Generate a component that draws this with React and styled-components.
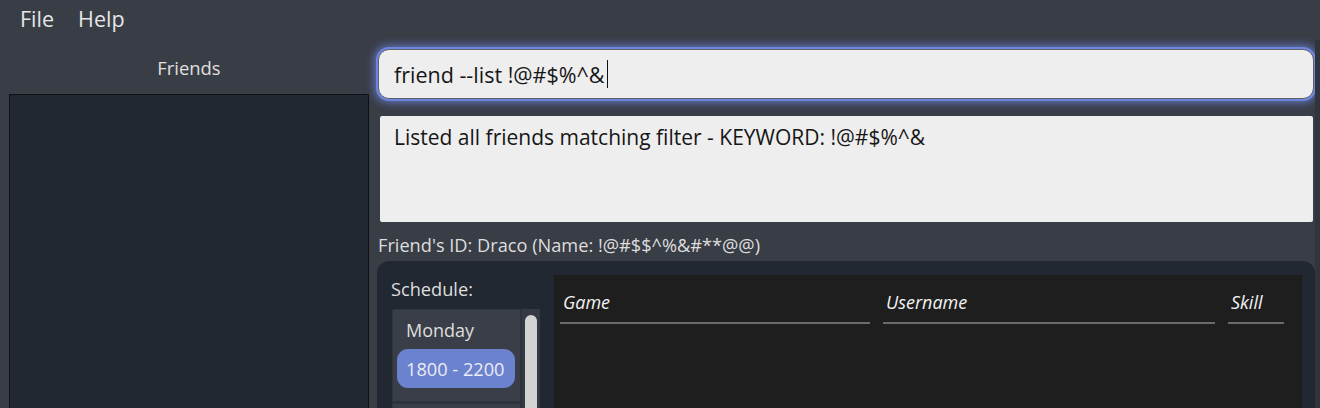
import React from "react";
import styled, { createGlobalStyle } from "styled-components";

const Global = createGlobalStyle`
  html, body { margin: 0; padding: 0; }
  body {
    background: #393d46;
    font-family: "Open Sans", "Noto Sans", sans-serif;
    color: #e2e2e2;
    overflow: hidden;
  }
`;

const Page = styled.div`
  width: 1320px;
  height: 408px;
  display: flex;
  flex-direction: column;
  overflow: hidden;
`;

const MenuBar = styled.div`
  height: 38px;
  flex-shrink: 0;
  display: flex;
  align-items: center;
  gap: 24px;
  padding-left: 20px;
  padding-bottom: 2px;
  box-sizing: border-box;
  font-size: 21.5px;
  color: #e6e6e6;
`;

const MenuItem = styled.span``;

const Main = styled.div`
  flex: 1;
  display: flex;
  min-height: 0;
`;

const LeftPanel = styled.div`
  width: 378px;
  display: flex;
  flex-direction: column;
  padding: 0 9px;
  box-sizing: border-box;
`;

const PanelTitle = styled.div`
  height: 56px;
  flex-shrink: 0;
  display: flex;
  align-items: center;
  justify-content: center;
  font-size: 18.4px;
  color: #e0e0e0;
  padding-top: 2px;
  box-sizing: border-box;
`;

const FriendList = styled.div`
  flex: 1;
  background: #222832;
  border: 1px solid #0e1014;
  border-bottom: none;
`;

const RightPanel = styled.div`
  width: 937px;
  display: flex;
  flex-direction: column;
  padding-top: 11px;
`;

const EdgeStrip = styled.div`
  flex: 1;
  margin-top: 2px;
  background: #30343c;
`;

const CommandBox = styled.div`
  height: 50px;
  flex-shrink: 0;
  margin-right: 1px;
  box-sizing: border-box;
  background: #eeeeee;
  border: 1px solid #5f6166;
  border-radius: 11px;
  box-shadow: 0 0 0 2px #6d85df, 0 0 9px 4px rgba(108, 132, 222, 0.75);
  display: flex;
  align-items: center;
  padding-left: 15px;
  font-size: 21.5px;
  color: #161616;
`;

const Caret = styled.span`
  display: inline-block;
  width: 1px;
  height: 28px;
  background: #111;
  margin-left: 2px;
`;

const ResultBox = styled.div`
  margin-top: 17px;
  margin-left: 2px;
  margin-right: 2px;
  height: 106px;
  flex-shrink: 0;
  box-sizing: border-box;
  background: #eeeeee;
  border-radius: 2px;
  padding: 7px 14px;
  font-size: 21px;
  color: #161616;
`;

const FriendId = styled.div`
  height: 39px;
  flex-shrink: 0;
  box-sizing: border-box;
  padding-top: 6px;
  display: flex;
  align-items: center;
  font-size: 18.2px;
  color: #dedede;
`;

const Card = styled.div`
  flex: 1;
  margin-left: -1px;
  background: #222832;
  border-radius: 12px 12px 0 0;
  padding: 14px 13px 0 14px;
  display: flex;
  gap: 14px;
  min-height: 0;
  overflow: hidden;
`;

const ScheduleCol = styled.div`
  width: 149px;
  display: flex;
  flex-direction: column;
  min-height: 0;
`;

const ScheduleLabel = styled.div`
  height: 34px;
  flex-shrink: 0;
  box-sizing: border-box;
  padding-bottom: 6px;
  display: flex;
  align-items: center;
  font-size: 18.2px;
  color: #dedede;
`;

const ScheduleList = styled.div`
  flex: 1;
  display: flex;
  background: #2f333b;
  margin-left: 1px;
  min-height: 0;
  overflow: hidden;
`;

const Cells = styled.div`
  width: 128px;
  padding: 1px 0 0 1px;
  display: flex;
  flex-direction: column;
  gap: 3px;
`;

const DayCell = styled.div`
  height: 91px;
  background: #3a3e48;
  box-sizing: border-box;
  padding: 6px 5px 0 4px;
  flex-shrink: 0;
`;

const DayName = styled.div`
  font-size: 18px;
  color: #dedede;
  padding-left: 9px;
  height: 27px;
  display: flex;
  align-items: center;
`;

const TimePill = styled.div`
  margin-top: 6px;
  height: 39px;
  border-radius: 11px;
  background: #6b82cf;
  color: #ececf4;
  font-size: 18.2px;
  display: flex;
  align-items: center;
  padding-left: 9px;
`;

const ScrollTrack = styled.div`
  width: 18px;
  margin-left: 2px;
  background: #353944;
  padding: 6px 3px 0 3px;
  box-sizing: border-box;
`;

const ScrollThumb = styled.div`
  height: 200px;
  background: #d3d3d3;
  border-radius: 6px;
`;

const Table = styled.div`
  flex: 1;
  background: #1e1e1e;
  padding: 14px 0 0 6px;
`;

const HeaderRow = styled.div`
  display: grid;
  grid-template-columns: 310px 332px 56px;
  column-gap: 13px;
`;

const HeaderCell = styled.div`
  font-style: italic;
  font-size: 18px;
  color: #f2f2f2;
  padding: 0 0 7px 3px;
  border-bottom: 2px solid #6a6a6a;
  height: 26px;
  display: flex;
  align-items: center;
`;

export default function App() {
  return (
    <Page>
      <Global />
      <MenuBar>
        <MenuItem>File</MenuItem>
        <MenuItem>Help</MenuItem>
      </MenuBar>
      <Main>
        <LeftPanel>
          <PanelTitle>Friends</PanelTitle>
          <FriendList />
        </LeftPanel>
        <RightPanel>
          <CommandBox>
            friend --list !@#$%^&amp;<Caret />
          </CommandBox>
          <ResultBox>Listed all friends matching filter - KEYWORD: !@#$%^&amp;</ResultBox>
          <FriendId>Friend's ID: Draco (Name: !@#$$^%&amp;#**@@)</FriendId>
          <Card>
            <ScheduleCol>
              <ScheduleLabel>Schedule:</ScheduleLabel>
              <ScheduleList>
                <Cells>
                  <DayCell>
                    <DayName>Monday</DayName>
                    <TimePill>1800 - 2200</TimePill>
                  </DayCell>
                  <DayCell />
                </Cells>
                <ScrollTrack>
                  <ScrollThumb />
                </ScrollTrack>
              </ScheduleList>
            </ScheduleCol>
            <Table>
              <HeaderRow>
                <HeaderCell>Game</HeaderCell>
                <HeaderCell>Username</HeaderCell>
                <HeaderCell>Skill</HeaderCell>
              </HeaderRow>
            </Table>
          </Card>
        </RightPanel>
        <EdgeStrip />
      </Main>
    </Page>
  );
}
